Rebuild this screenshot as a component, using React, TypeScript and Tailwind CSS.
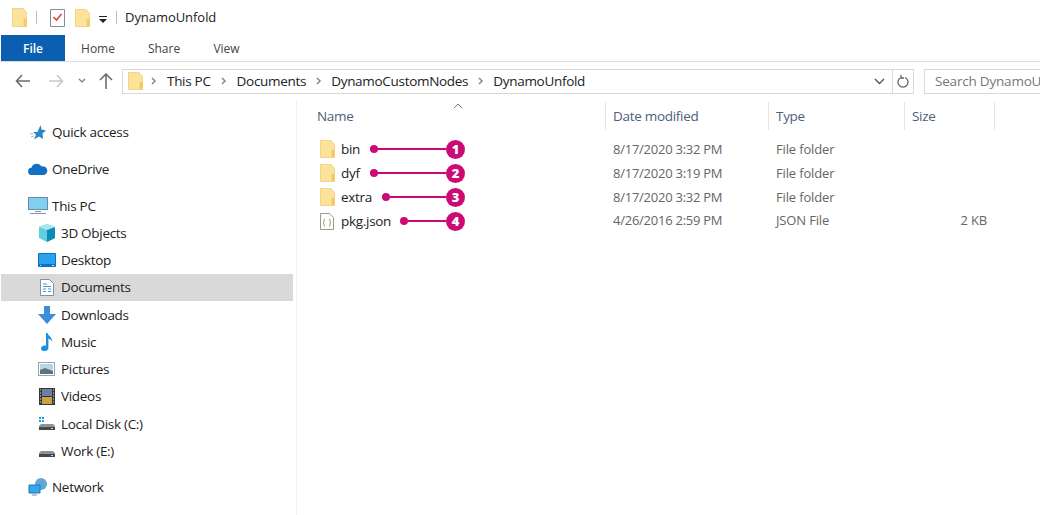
const FONT = "font-['Open_Sans','Noto_Sans',sans-serif]"

function Folder({ w = 15, h = 18 }: { w?: number; h?: number }) {
  return (
    <svg width={w} height={h} viewBox="0 0 15 18" preserveAspectRatio="none" className="shrink-0">
      <path d="M0.500 0.500h10.500l3.500 4v13H0.500z" fill="#fde39a" stroke="#f0d48c" />
      <path d="M11.500 10h3v7.500h-3z" fill="#f5c866" />
    </svg>
  )
}

function Chevron() {
  return (
    <svg width="6" height="8" viewBox="0 0 6 8" className="shrink-0">
      <path d="M1 1l3 3-3 3" fill="none" stroke="#888" strokeWidth="1.500" />
    </svg>
  )
}

function QuickStar() {
  return (
    <svg width="16" height="15" viewBox="0 0 16 15">
      <path d="M10.500 0l1 4.500 4.500 1-3.500 3 .5 5.500-4-2.500-5 3 2-5-3-2.500h4.500z" fill="#2b86c9" />
      <path d="M0 9l3-.5M1 12l3-1" stroke="#8fc2e6" />
    </svg>
  )
}

function Cloud() {
  return (
    <svg width="20" height="12" viewBox="0 0 20 12">
      <path d="M4 12a3.600 3.600 0 0 1-.6-7.200A5.600 5.600 0 0 1 13.600 3.400 4.400 4.400 0 0 1 16 12z" fill="#1170c4" />
    </svg>
  )
}

function Monitor() {
  return (
    <svg width="20" height="18" viewBox="0 0 20 18">
      <rect x="0.500" y="0.500" width="19" height="12" fill="#7fd0f2" stroke="#6a8ba0" />
      <path d="M7 14h6v1H7zM2 16h16v1H2z" fill="#7b98ad" />
    </svg>
  )
}

function Cube() {
  return (
    <svg width="18" height="18" viewBox="0 0 18 18">
      <path d="M9 0l8 3v11l-8 4-8-4V3z" fill="#62cfe0" />
      <path d="M9 6l8-3v11l-8 4z" fill="#0f8ab8" />
      <path d="M9 0l8 3-8 3-8-3z" fill="#a6e6ee" />
    </svg>
  )
}

function Desktop() {
  return (
    <svg width="18" height="14" viewBox="0 0 18 14">
      <rect width="18" height="14" rx="1" fill="#0e71c9" />
      <rect x="1" y="1" width="16" height="10" fill="#2aa3ee" />
      <path d="M2 12.500h1M14 12.500h2" stroke="#cfe8fa" />
    </svg>
  )
}

function DocIcon() {
  return (
    <svg width="14" height="17" viewBox="0 0 14 17">
      <path d="M.5.5h9l4 4v12H.5z" fill="#fff" stroke="#8a8f94" />
      <path d="M3 5h4M3 7.500h8M3 10h3M8 10h3M3 12.500h3M8 12.500h3" stroke="#3c9ad6" />
    </svg>
  )
}

function DownArrow() {
  return (
    <svg width="18" height="18" viewBox="0 0 18 18">
      <path d="M6 0h6v8h6l-9 10L0 8h6z" fill="#3a8fd8" />
    </svg>
  )
}

function Note() {
  return (
    <svg width="14" height="18" viewBox="0 0 14 18">
      <path d="M6 0h1.600c.4 3 5 4 4.600 9-.8-2-2.400-3-3.800-3.400V15c0 1.800-1.600 3-3.800 3C2.400 18 1 17 1 15.400s1.800-2.800 3.600-2.800c.5 0 1 .1 1.400.2z" fill="#1b8fdc" />
    </svg>
  )
}

function PicturesIcon() {
  return (
    <svg width="17" height="14" viewBox="0 0 17 14">
      <rect x=".5" y=".5" width="16" height="13" fill="#fff" stroke="#9aa3aa" />
      <rect x="2" y="2" width="13" height="10" fill="#b6d6e6" />
      <path d="M2 8l5-2 8 3v3H2z" fill="#5d7480" />
    </svg>
  )
}

function Film() {
  return (
    <svg width="16" height="17" viewBox="0 0 16 17">
      <rect width="16" height="17" fill="#33383c" />
      <rect x="3" y="1" width="10" height="7" fill="#6f7fa0" />
      <rect x="3" y="9" width="10" height="7" fill="#c9a33f" />
      <path d="M1 2h1M1 5h1M1 8h1M1 11h1M1 14h1M14 2h1M14 5h1M14 8h1M14 11h1M14 14h1" stroke="#ddd" />
    </svg>
  )
}

function Disk({ windows }: { windows?: boolean }) {
  return (
    <svg width="18" height="15" viewBox="0 0 18 15">
      {windows && <path d="M1 1h2v2H1zM4 1h2v2H4zM1 4h2v2H1zM4 4h2v2H4z" fill="#19a0e3" />}
      <path d="M3 8h12l2 2v4H1v-4z" fill="#8e9296" />
      <rect x="1" y="11" width="16" height="3" fill="#44484c" />
      <rect x="13" y="12" width="2" height="1" fill="#cfd3d6" />
    </svg>
  )
}

function Net() {
  return (
    <svg width="20" height="18" viewBox="0 0 20 18">
      <circle cx="13" cy="6" r="6" fill="#5fa9d8" />
      <path d="M1 7h11v8H1z" fill="#35a8ea" stroke="#1a78b8" />
      <path d="M4 17h5" stroke="#7d8f9b" />
    </svg>
  )
}

function SideRow({
  icon,
  label,
  sub,
  active,
  className = '',
}: {
  icon: React.ReactNode
  label: string
  sub?: boolean
  active?: boolean
  className?: string
}) {
  return (
    <div className={`flex h-[27.25px] items-center ${active ? 'bg-[#d9d9d9]' : ''} ${className}`}>
      <div className={`flex w-[25px] justify-center pr-[4px] ${sub ? 'ml-[35px]' : 'ml-[26px]'}`}>{icon}</div>
      <span className="text-[13.5px] tracking-[-0.3px] text-[#222]">{label}</span>
    </div>
  )
}

const FILES = [
  { name: 'bin', date: '8/17/2020 3:32 PM', type: 'File folder', size: '', num: 1, dotGap: 'ml-[10px]' },
  { name: 'dyf', date: '8/17/2020 3:19 PM', type: 'File folder', size: '', num: 2, dotGap: 'ml-[10px]' },
  { name: 'extra', date: '8/17/2020 3:32 PM', type: 'File folder', size: '', num: 3, dotGap: 'ml-[10px]' },
  { name: 'pkg.json', date: '4/26/2016 2:59 PM', type: 'JSON File', size: '2 KB', num: 4, dotGap: 'ml-[9px]' },
]

export default function App() {
  return (
    <div className={`h-[515px] w-[1040px] overflow-hidden bg-white ${FONT}`}>
      <div className="flex h-[35px] items-center pl-[12px]">
        <Folder h={19} />
        <div className="ml-[9px] h-[13px] w-px bg-[#bbb]" />
        <svg width="15" height="18" viewBox="0 0 15 18" className="ml-[13px]">
          <path d="M.5.5h14v17H.5z" fill="#fff" stroke="#8c8c8c" />
          <path d="M3.500 8l3 3 5-6" fill="none" stroke="#d2502f" strokeWidth="1.600" />
        </svg>
        <div className="ml-[10px]">
          <Folder />
        </div>
        <svg width="8" height="7" viewBox="0 0 8 7" className="ml-[9px] mt-[3px]">
          <path d="M0 0h8v1H0zM0 3h8L4 7z" fill="#222" />
        </svg>
        <div className="ml-[9px] h-[13px] w-px bg-[#bbb]" />
        <span className="ml-[8px] text-[13px] tracking-[-0.05px] text-[#222]">DynamoUnfold</span>
      </div>

      <div className="flex h-[27px] items-stretch border-b border-[#dcdcdc] pl-px text-[12px] text-[#444]">
        <div className="flex w-[64px] items-center justify-center bg-[#0a5fb0] pt-[1px] font-semibold text-white">File</div>
        <div className="flex w-[66px] items-center justify-center pt-[1px]">Home</div>
        <div className="flex w-[66px] items-center justify-center pt-[1px]">Share</div>
        <div className="flex w-[59px] items-center justify-center pt-[1px]">View</div>
      </div>

      <div className="flex h-[38px] items-center">
        <div className="flex w-[122px] items-center pl-[15px]">
          <svg width="16" height="14" viewBox="0 0 16 14">
            <path d="M7 1L1.500 7 7 13M2 7h13" fill="none" stroke="#6d6d6d" strokeWidth="1.600" />
          </svg>
          <svg width="16" height="14" viewBox="0 0 16 14" className="ml-[17px]">
            <path d="M9 1l5.500 6L9 13M14 7H1" fill="none" stroke="#c9c9c9" strokeWidth="1.600" />
          </svg>
          <svg width="8" height="6" viewBox="0 0 8 6" className="ml-[14px]">
            <path d="M1 1l3 3 3-3" fill="none" stroke="#777" strokeWidth="1.200" />
          </svg>
          <svg width="14" height="16" viewBox="0 0 14 16" className="ml-[13px]">
            <path d="M1 7l6-6 6 6M7 1.500V16" fill="none" stroke="#6d6d6d" strokeWidth="1.600" />
          </svg>
        </div>
        <div className="flex h-[25px] w-[771px] items-center border border-[#d9d9d9] pl-[5px] pr-[5px] text-[13.5px] tracking-[-0.3px] text-[#222]">
          <Folder />
          <div className="ml-[8px]"><Chevron /></div>
          <span className="ml-[10px]">This PC</span>
          <div className="ml-[10px]"><Chevron /></div>
          <span className="ml-[10px]">Documents</span>
          <div className="ml-[10px]"><Chevron /></div>
          <span className="ml-[9px]">DynamoCustomNodes</span>
          <div className="ml-[10px]"><Chevron /></div>
          <span className="ml-[9px]">DynamoUnfold</span>
          <svg width="11" height="7" viewBox="0 0 11 7" className="ml-auto mr-[2px]">
            <path d="M1 1l4.500 4.500L10 1" fill="none" stroke="#555" strokeWidth="1.400" />
          </svg>
        </div>
        <div className="flex h-[25px] w-[21px] items-center justify-center border-y border-r border-[#d9d9d9]">
          <svg width="13" height="14" viewBox="0 0 13 14">
            <path d="M4 3.500a5 5 0 1 0 4 0M4 1v3h3" fill="none" stroke="#666" strokeWidth="1.300" />
          </svg>
        </div>
        <div className="ml-[10px] flex h-[25px] flex-1 items-center overflow-hidden whitespace-nowrap border-y border-l border-[#d9d9d9] pl-[10px] text-[13.5px] tracking-[-0.2px] text-[#777]">
          Search DynamoUnfold
        </div>
      </div>

      <div className="flex h-[415px]">
        <div className="w-[297px] shrink-0 border-r border-[#f0f0f0] pl-px pr-[3px] pt-[18.5px]">
          <SideRow icon={<QuickStar />} label="Quick access" />
          <SideRow icon={<Cloud />} label="OneDrive" className="mt-[10px]" />
          <SideRow icon={<Monitor />} label="This PC" className="mt-[9px]" />
          <SideRow sub icon={<Cube />} label="3D Objects" />
          <SideRow sub icon={<Desktop />} label="Desktop" />
          <SideRow sub active icon={<DocIcon />} label="Documents" />
          <SideRow sub icon={<DownArrow />} label="Downloads" />
          <SideRow sub icon={<Note />} label="Music" />
          <SideRow sub icon={<PicturesIcon />} label="Pictures" />
          <SideRow sub icon={<Film />} label="Videos" />
          <SideRow sub icon={<Disk windows />} label="Local Disk (C:)" />
          <SideRow sub icon={<Disk />} label="Work (E:)" />
          <SideRow icon={<Net />} label="Network" className="mt-[9px]" />
        </div>

        <div className="flex-1 text-[13.5px] tracking-[-0.3px]">
          <div className="relative grid h-[36px] grid-cols-[308px_163px_136px_91px] items-start pt-[2px] text-[#4c607a]">
            <svg width="10" height="6" viewBox="0 0 10 6" className="absolute left-[156px] top-[3px]">
              <path d="M1 5l4-4 4 4" fill="none" stroke="#777" />
            </svg>
            <div className="flex h-[28px] items-center pl-[20px]">Name</div>
            <div className="flex h-[28px] items-center border-l border-[#e6e6e6] pl-[7px]">Date modified</div>
            <div className="flex h-[28px] items-center border-l border-[#e6e6e6] pl-[7px]">Type</div>
            <div className="flex h-[28px] items-center border-x border-[#e6e6e6] pl-[7px]">Size</div>
          </div>
          <div className="pt-[1px]">
            {FILES.map((f) => (
              <div key={f.name} className="grid h-[24px] grid-cols-[308px_163px_136px_91px] items-center">
                <div className="flex items-center pl-[23px] pr-[140px]">
                  {f.num === 4 ? (
                    <svg width="14" height="17" viewBox="0 0 14 17" className="shrink-0">
                      <path d="M.5.5h9l4 4v12H.5z" fill="#fff" stroke="#999" />
                      <path d="M5 6c-1 0-1 1-1 2.500s-1 1.500-1 1.500 1 0 1 1.500.5 2 1 2M9 6c1 0 1 1 1 2.500s1 1.500 1 1.500-1 0-1 1.500-.5 2-1 2" fill="none" stroke="#7fa832" />
                    </svg>
                  ) : (
                    <Folder />
                  )}
                  <span className={`text-[#222] ${f.num === 4 ? 'ml-[7px]' : 'ml-[6px]'}`}>{f.name}</span>
                  <div className={`${f.dotGap} h-[8px] w-[8px] shrink-0 rounded-full bg-[#cc0a76]`} />
                  <div className="h-[2px] flex-1 bg-[#cc0a76]" />
                  <div className="flex h-[19px] w-[19px] shrink-0 items-center justify-center rounded-full bg-[#cc0a76] text-[13px] font-extrabold leading-none tracking-normal text-white">
                    {f.num}
                  </div>
                </div>
                <div className={`pl-[8px] text-[13px] tracking-[-0.25px] text-[#666] ${f.num === 4 ? '' : 'pt-[1px]'}`}>{f.date}</div>
                <div className={`pl-[8px] text-[13px] tracking-[-0.15px] text-[#666] ${f.num === 4 ? '' : 'pt-[1px]'}`}>{f.type}</div>
                <div className="pr-[8px] text-right text-[13px] tracking-[-0.15px] text-[#666]">{f.size}</div>
              </div>
            ))}
          </div>
        </div>
      </div>
    </div>
  )
}
